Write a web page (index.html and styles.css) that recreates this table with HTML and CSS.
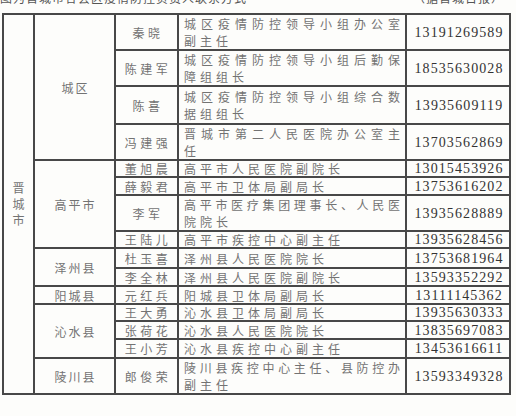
FILE: index.html
```html
<!DOCTYPE html>
<html lang="zh">
<head>
<meta charset="utf-8">
<link rel="stylesheet" href="styles.css">
</head>
<body>
<div class="caption">
  <span class="cap-left">图为晋城市各县区疫情防控负责人联系方式</span>
  <span class="cap-right">（据晋城日报）</span>
</div>
<table class="tbl">
  <colgroup>
    <col class="c-city"><col class="c-area"><col class="c-name"><col class="c-duty"><col class="c-tel">
  </colgroup>
  <tbody>
    <tr class="h36">
      <td class="city" rowspan="15">晋<br>城<br>市</td>
      <td class="area" rowspan="4">城区</td>
      <td class="name">秦晓</td>
      <td class="duty two"><span class="l1">城区疫情防控领导小组办公室</span>副主任</td>
      <td class="tel">13191269589</td>
    </tr>
    <tr class="h35">
      <td class="name">陈建军</td>
      <td class="duty two"><span class="l1">城区疫情防控领导小组后勤保</span>障组组长</td>
      <td class="tel">18535630028</td>
    </tr>
    <tr class="h38">
      <td class="name">陈喜</td>
      <td class="duty two"><span class="l1">城区疫情防控领导小组综合数</span>据组组长</td>
      <td class="tel">13935609119</td>
    </tr>
    <tr class="h36">
      <td class="name">冯建强</td>
      <td class="duty two"><span class="l1">晋城市第二人民医院办公室主</span>任</td>
      <td class="tel">13703562869</td>
    </tr>
    <tr class="h17">
      <td class="area" rowspan="4">高平市</td>
      <td class="name">董旭晨</td>
      <td class="duty">高平市人民医院副院长</td>
      <td class="tel">13015453926</td>
    </tr>
    <tr class="h18">
      <td class="name">薛毅君</td>
      <td class="duty">高平市卫体局副局长</td>
      <td class="tel">13753616202</td>
    </tr>
    <tr class="h36">
      <td class="name">李军</td>
      <td class="duty two"><span class="l1">高平市医疗集团理事长、人民医</span>院院长</td>
      <td class="tel">13935628889</td>
    </tr>
    <tr class="h17">
      <td class="name">王陆儿</td>
      <td class="duty">高平市疾控中心副主任</td>
      <td class="tel">13935628456</td>
    </tr>
    <tr class="h20">
      <td class="area" rowspan="2">泽州县</td>
      <td class="name">杜玉喜</td>
      <td class="duty">泽州县人民医院院长</td>
      <td class="tel">13753681964</td>
    </tr>
    <tr class="h18">
      <td class="name">李全林</td>
      <td class="duty">泽州县人民医院副院长</td>
      <td class="tel">13593352292</td>
    </tr>
    <tr class="h18">
      <td class="area">阳城县</td>
      <td class="name">元红兵</td>
      <td class="duty">阳城县卫体局副局长</td>
      <td class="tel">13111145362</td>
    </tr>
    <tr class="h17">
      <td class="area" rowspan="3">沁水县</td>
      <td class="name">王大勇</td>
      <td class="duty">沁水县卫体局副局长</td>
      <td class="tel">13935630333</td>
    </tr>
    <tr class="h18">
      <td class="name">张荷花</td>
      <td class="duty">沁水县人民医院院长</td>
      <td class="tel">13835697083</td>
    </tr>
    <tr class="h19">
      <td class="name">王小芳</td>
      <td class="duty">沁水县疾控中心副主任</td>
      <td class="tel">13453616611</td>
    </tr>
    <tr class="h36">
      <td class="area">陵川县</td>
      <td class="name">郎俊荣</td>
      <td class="duty two"><span class="l1">陵川县疾控中心主任、县防控办</span>副主任</td>
      <td class="tel">13593349328</td>
    </tr>
  </tbody>
</table>
</body>
</html>
```

FILE: styles.css
```css
html, body {
  margin: 0;
  padding: 0;
  background: #fdfdfb;
}

body {
  font-family: "Noto Sans CJK SC", "DejaVu Sans", sans-serif;
  color: #737373;
  width: 516px;
  height: 416px;
  overflow: hidden;
}

.caption {
  height: 13px;
  overflow: hidden;
  display: flex;
  justify-content: space-between;
  padding: 0 12px 0 0;
}

.caption span {
  display: block;
  font-size: 12px;
  line-height: 14px;
  margin-top: -9px;
  color: #555;
  letter-spacing: 1px;
}

.tbl {
  margin-left: 2px;
  border-collapse: collapse;
  table-layout: fixed;
  width: 509px;
}

.c-city { width: 31px; }
.c-area { width: 81px; }
.c-name { width: 63px; }
.c-duty { width: 228px; }
.c-tel { width: 104px; }

.tbl td {
  border: 2px solid #484848;
  padding: 0;
  font-size: 12px;
  line-height: 15px;
  vertical-align: middle;
  overflow: hidden;
}

.h17 { height: 17px; }
.h18 { height: 18px; }
.h19 { height: 19px; }
.h20 { height: 20px; }
.h35 { height: 35px; }
.h36 { height: 36px; }
.h38 { height: 38px; }

.tbl td.city {
  text-align: center;
  font-size: 12px;
  line-height: 16px;
}

.tbl td.area {
  text-align: center;
  font-size: 12px;
  letter-spacing: 2px;
  padding-left: 2px;
}

.tbl td.name {
  text-align: center;
  letter-spacing: 3.5px;
  padding-left: 3px;
}

.tbl td.duty {
  padding: 0 5px 0 5px;
  letter-spacing: 4px;
  text-align: left;
}

.tbl td.two {
  line-height: 17px;
}

.l1 {
  display: block;
  letter-spacing: 0;
  text-align: justify;
  text-align-last: justify;
  white-space: nowrap;
}

.tbl td.tel {
  text-align: center;
  font-family: "Liberation Serif", serif;
  font-size: 14px;
  letter-spacing: 1.1px;
  color: #333;
  padding-left: 2px;
}
```
